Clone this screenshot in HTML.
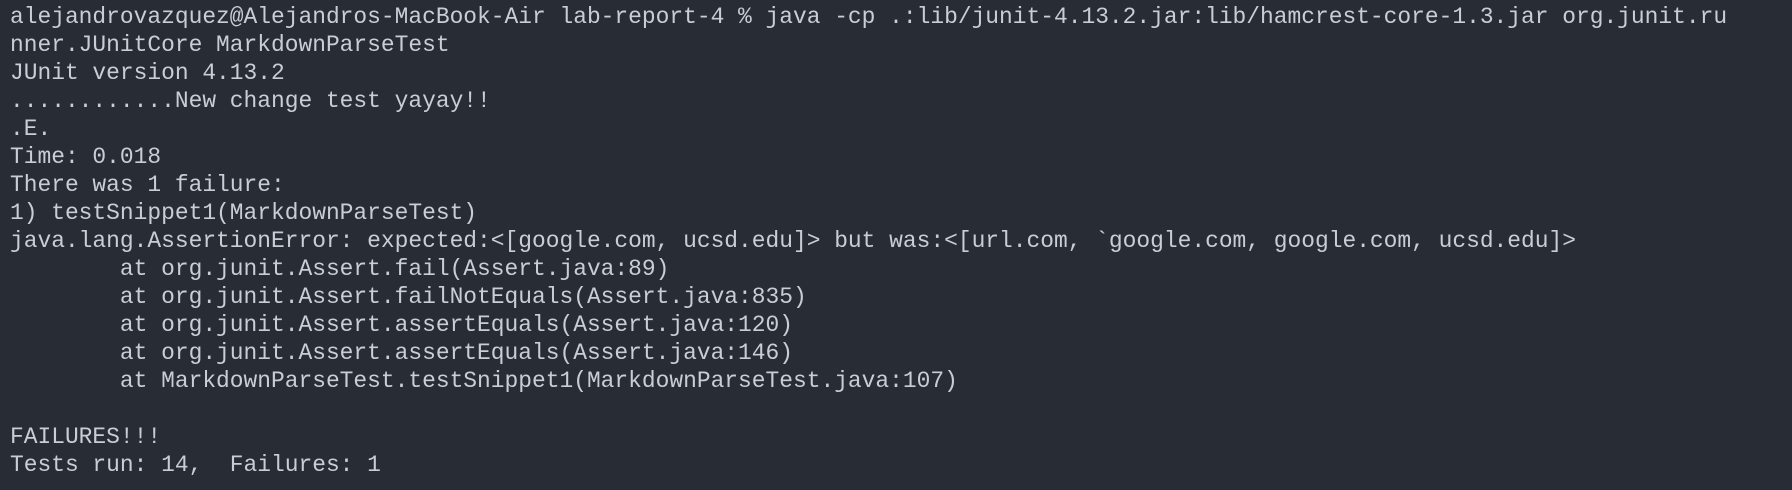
<!DOCTYPE html>
<html><head><style>
html,body{margin:0;padding:0;background:#282c34;width:1792px;height:490px;overflow:hidden}
pre{margin:0;position:absolute;left:10px;top:3px;font-family:"Liberation Mono",monospace;font-size:22.9px;line-height:28px;color:#c9cdd5;white-space:pre}
</style></head><body>
<pre>alejandrovazquez@Alejandros-MacBook-Air lab-report-4 % java -cp .:lib/junit-4.13.2.jar:lib/hamcrest-core-1.3.jar org.junit.ru
nner.JUnitCore MarkdownParseTest
JUnit version 4.13.2
............New change test yayay!!
.E.
Time: 0.018
There was 1 failure:
1) testSnippet1(MarkdownParseTest)
java.lang.AssertionError: expected:&lt;[google.com, ucsd.edu]&gt; but was:&lt;[url.com, `google.com, google.com, ucsd.edu]&gt;
        at org.junit.Assert.fail(Assert.java:89)
        at org.junit.Assert.failNotEquals(Assert.java:835)
        at org.junit.Assert.assertEquals(Assert.java:120)
        at org.junit.Assert.assertEquals(Assert.java:146)
        at MarkdownParseTest.testSnippet1(MarkdownParseTest.java:107)

FAILURES!!!
Tests run: 14,  Failures: 1</pre>
</body></html>
